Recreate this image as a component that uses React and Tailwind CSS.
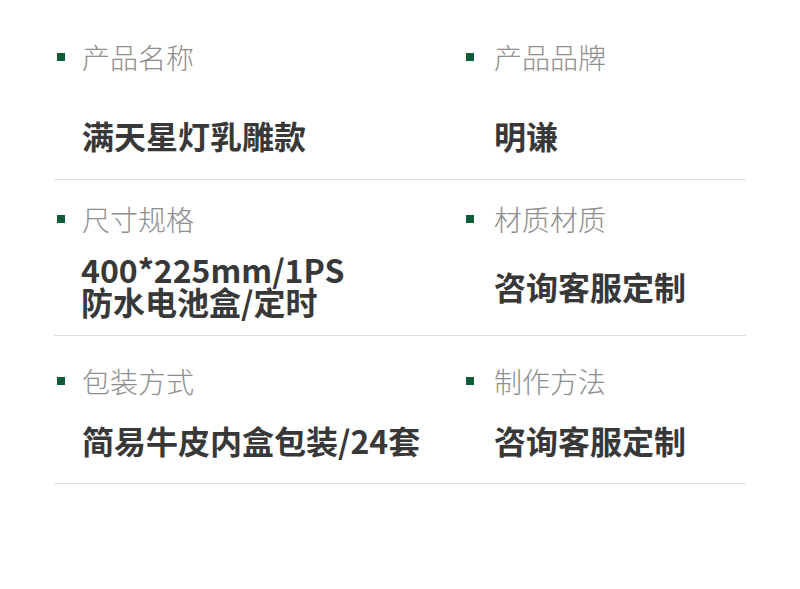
export default function App() {
  const font = { fontFamily: '"Noto Sans CJK SC", "Noto Sans", sans-serif' };
  const Label = ({ children }) => (
    <div className="flex items-center h-[36px]">
      <span className="ml-[3px] w-[8px] h-[8px] bg-[#0b5c37] shrink-0" />
      <span className="ml-[17px] text-[28px] leading-[36px] font-light text-[#8e8e8e]">{children}</span>
    </div>
  );
  const LabelR = ({ children }) => (
    <div className="flex items-center h-[36px]">
      <span className="ml-[3px] w-[8px] h-[8px] bg-[#0b5c37] shrink-0" />
      <span className="ml-[20px] text-[28px] leading-[36px] font-light text-[#8e8e8e]">{children}</span>
    </div>
  );
  const Value = ({ children, pl = "pl-[28px]" }) => (
    <div className={`${pl} text-[32px] leading-[40px] font-bold text-[#383838]`}>{children}</div>
  );
  return (
    <div className="w-[800px] h-[589px] bg-white overflow-hidden" style={font}>
      <div className="mx-[54px]">
        {/* Row 1 */}
        <div className="grid grid-cols-[409px_1fr] pt-[39px] pb-[24px] border-b border-[#dcdcdc]">
          <div>
            <Label>产品名称</Label>
            <div className="mt-[40px]"><Value>满天星灯乳雕款</Value></div>
          </div>
          <div>
            <LabelR>产品品牌</LabelR>
            <div className="mt-[40px]"><Value pl="pl-[31px]">明谦</Value></div>
          </div>
        </div>
        {/* Row 2 */}
        <div className="grid grid-cols-[409px_1fr] pt-[21px] pb-[17px] border-b border-[#dcdcdc]">
          <div>
            <Label>尺寸规格</Label>
            <div className="mt-[16px] pl-[27px] text-[32px] leading-[32px] font-bold text-[#383838] pb-[1px]">
              <div>400*225mm/1PS</div>
              <div>防水电池盒/定时</div>
            </div>
          </div>
          <div className="flex flex-col">
            <LabelR>材质材质</LabelR>
            <div className="flex-1 flex items-center mt-[16px]"><Value pl="pl-[31px]">咨询客服定制</Value></div>
          </div>
        </div>
        {/* Row 3 */}
        <div className="grid grid-cols-[409px_1fr] pt-[27px] pb-[23px] border-b border-[#dcdcdc]">
          <div>
            <Label>包装方式</Label>
            <div className="mt-[21px]"><Value>简易牛皮内盒包装/24套</Value></div>
          </div>
          <div>
            <LabelR>制作方法</LabelR>
            <div className="mt-[21px]"><Value pl="pl-[31px]">咨询客服定制</Value></div>
          </div>
        </div>
      </div>
    </div>
  );
}
